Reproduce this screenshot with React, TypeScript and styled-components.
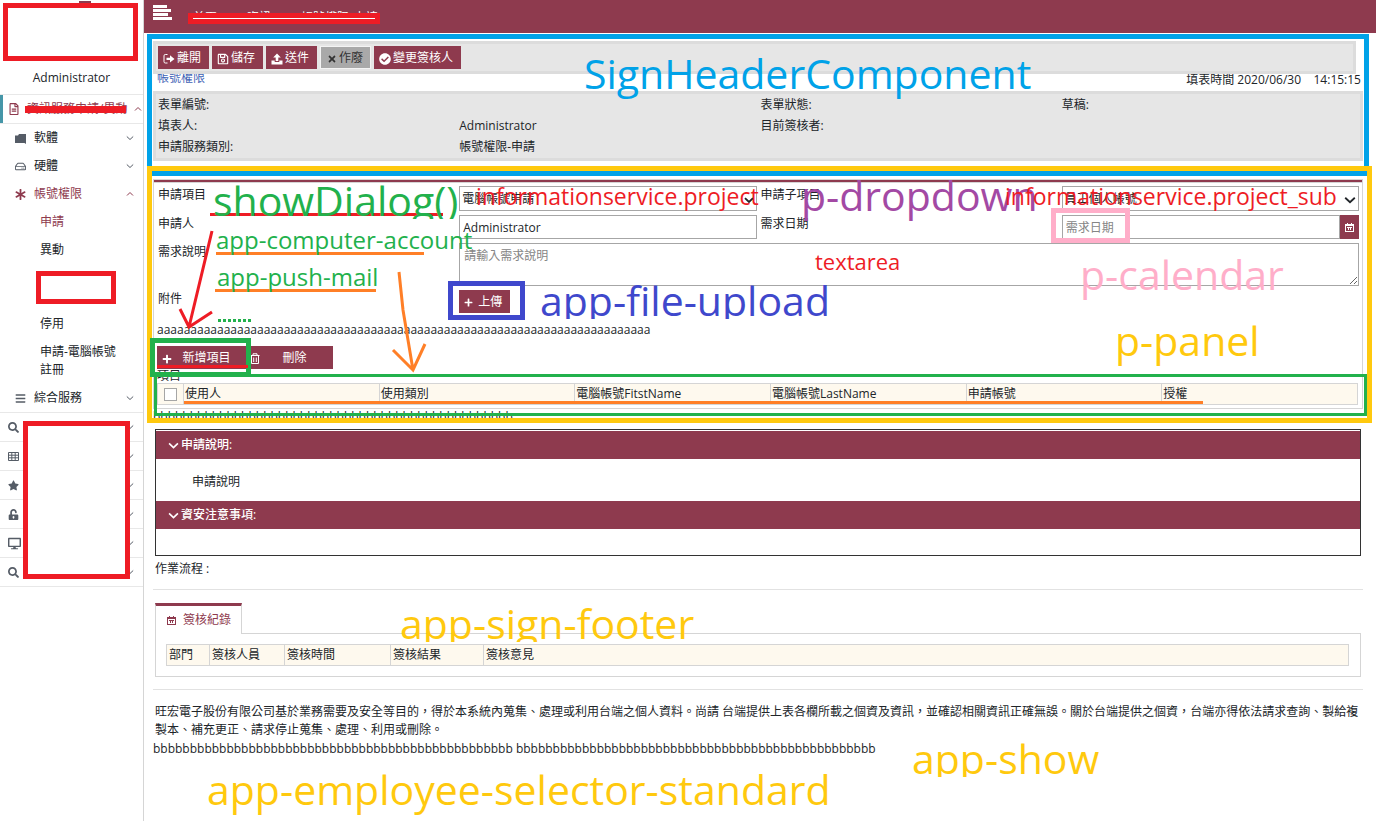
import React from 'react';
import styled, { createGlobalStyle, css } from 'styled-components';
import { FaAsterisk, FaBars, FaDesktop, FaFolder, FaPlus, FaSearch, FaStar, FaTimes, FaCheckCircle, FaRegHdd, FaRegSave, FaRegFileAlt, FaUnlockAlt } from 'react-icons/fa';

const wine = '#8e3a4e';
const red = '#ee1c25';
const green = '#22b14c';
const orange = '#ff7f27';
const gold = '#ffc90e';
const sky = '#00a2e8';
const indigo = '#3f48cc';
const pink = '#ffaec9';
const purple = '#a349a4';

const GlobalStyle = createGlobalStyle`
  *, *::before, *::after { box-sizing: border-box; }
  body {
    margin: 0;
    background: #fff;
    color: #212529;
    font: 12px/18px "Open Sans", "Noto Sans CJK TC", sans-serif;
  }
  button, input, select, textarea { font: inherit; color: inherit; }
  svg { display: block; flex: none; }
`;

const Page = styled.div`
  position: relative;
  display: flex;
  min-height: 100vh;
  overflow: hidden;
`;

/* ---------- sidebar ---------- */
const Sidebar = styled.aside`
  flex: none;
  width: 144px;
  border-right: 1px solid #d5d5d5;
`;
const Profile = styled.div`
  display: flex;
  flex-direction: column;
  align-items: center;
  height: 94px;
  padding-top: 1px;
`;
const Logo = styled.div`
  width: 12px;
  height: 12px;
  margin: 0 0 56px 26px;
  background: ${wine};
`;
const MenuList = styled.ul`
  margin: 0;
  padding: 0;
  list-style: none;
`;
const MenuLink = styled.a<{ $level: number; $active?: boolean }>`
  display: flex;
  align-items: center;
  gap: ${p => (p.$level === 0 ? 7 : 8)}px;
  min-height: 28px;
  padding: 5px 9px 5px ${p => [8, 15, 40][p.$level]}px;
  color: ${p => (p.$active ? wine : '#212529')};
  text-decoration: none;
  > svg { color: ${p => (p.$active ? wine : '#555c66')}; }
`;
const MenuGroup = styled.li<{ $current?: boolean }>`
  border-top: 1px solid #e8e8e8;
  > a { ${p => p.$current && css`box-shadow: inset 3px 0 #4596a8;`} }
  &:last-child { border-bottom: 1px solid #e8e8e8; }
`;
const SubList = styled(MenuList)`
  border-top: 1px solid #e8e8e8;
`;
const MenuText = styled.span`
  flex: 1;
  white-space: nowrap;
`;
const WrapText = styled.span`
  width: 80px;
  min-height: 36px;
`;

/* ---------- main column ---------- */
const Main = styled.main`
  flex: 1;
  min-width: 0;
`;
const TopBar = styled.header`
  display: flex;
  gap: 21px;
  height: 33px;
  padding: 5px 9px;
  background: ${wine};
  color: #fff;
`;
const Crumbs = styled.nav`
  display: flex;
  gap: 30px;
  line-height: 26px;
`;
const PlainButton = styled.button`
  display: block;
  align-self: flex-start;
  padding: 0;
  border: 0;
  background: none;
`;
const Content = styled.div`
  padding: 8px 13px 0 9px;
`;
const Toolbar = styled.div`
  display: flex;
  gap: 3px;
  margin-right: 7px;
  padding: 2px;
  border: 3px solid #dcdcdc;
  background: #e6e6e6;
`;
const Button = styled.button<{ $wide?: boolean }>`
  display: flex;
  align-items: center;
  gap: 2px;
  height: 23px;
  padding: 0 8px 0 5px;
  border: 0;
  background: ${wine};
  color: #fff;
  white-space: nowrap;
  > svg { margin-top: 2px; }
  &:disabled {
    padding: 0 7px 0 6px;
    border: 1px solid #f4f4f4;
    background: #a9a9a9;
    color: #333;
  }
  ${p => p.$wide && css`
    flex: 1;
    padding: 0 6px 0 5px;
    > span { flex: 1; text-align: center; }
  `}
`;
const TitleRow = styled.div`
  display: flex;
  justify-content: space-between;
  height: 17px;
  padding: 0 2px 0 4px;
  overflow: hidden;
  line-height: 12px;
`;
const TitleLink = styled.a`
  color: #3f63b5;
  line-height: 8px;
  text-decoration: none;
`;
const Time = styled.span`
  white-space: pre;
`;
const InfoGrid = styled.dl`
  display: grid;
  grid-template-columns: repeat(4, 1fr);
  grid-auto-rows: 21px;
  column-gap: 4px;
  margin: 0;
  padding: 0 1px 1px 2px;
  border: 3px solid #dcdcdc;
  background: #e6e6e6;
  line-height: 21px;
`;
const Term = styled.dt``;
const Detail = styled.dd`
  margin: 0;
`;

/* ---------- application form ---------- */
const Panel = styled.section`
  margin-top: 18px;
  padding-bottom: 3px;
  border: 1px solid #d5d5d5;
`;
const PanelEdge = styled.div`
  height: 3px;
  border-top: 2px solid ${wine};
  border-bottom: 1px solid #d5d5d5;
`;
const FormGrid = styled.form`
  display: grid;
  grid-template-columns: repeat(4, 1fr);
  grid-template-rows: 25px 24px 43px 23px;
  gap: 4px;
  padding: 3px 3px 0 4px;
`;
const Label = styled.label`
  line-height: 17px;
`;
const field = css`
  width: 100%;
  height: 100%;
  margin: 0;
  padding: 0 4px;
  border: 1px solid #a6a6a6;
  border-radius: 0;
  background: #fff;
  outline: 0;
`;
const TextBox = styled.input`
  ${field}
  min-width: 0;
  padding: 0 3px;
  &::placeholder { color: #858585; opacity: 1; }
`;
const TextArea = styled.textarea`
  ${field}
  grid-column: 2 / 5;
  padding: 3px 4px;
  &::placeholder { color: #858585; opacity: 1; }
`;
const SelectBox = styled.div`
  display: grid;
  align-items: center;
  > * { grid-area: 1 / 1; }
  > svg { justify-self: end; margin: 3px 3px 0 0; }
`;
const Select = styled.select`
  ${field}
  padding: 0 2px;
  appearance: none;
`;
const DateBox = styled.div`
  display: flex;
`;
const DateButton = styled.button`
  display: flex;
  flex: none;
  align-items: center;
  justify-content: center;
  width: 19px;
  padding: 0;
  border: 0;
  background: ${wine};
  color: #fff;
`;
const Upload = styled.div`
  display: flex;
`;
const Filler = styled.p`
  margin: 0;
  white-space: nowrap;
`;
const ItemArea = styled.div`
  margin-top: 8px;
  padding: 0 4px 0 3px;
`;
const ItemButtons = styled.div`
  display: flex;
  width: 176px;
  margin-top: 7px;
`;
const ItemCaption = styled.div`
  height: 14px;
  line-height: 13px;
`;
const DataTable = styled.table`
  width: 100%;
  border-collapse: collapse;
  table-layout: fixed;
  background: #fef9ee;
  line-height: 20px;
`;
const HeadCell = styled.th<{ $w?: number; $tight?: boolean }>`
  width: ${p => (p.$w ? `${p.$w}px` : 'auto')};
  height: 21px;
  padding: 0 ${p => (p.$tight ? 1 : 2)}px;
  border: 1px solid #d5d5d5;
  font-weight: 400;
  text-align: left;
`;
const Tick = styled.input`
  display: block;
  appearance: none;
  width: 13px;
  height: 13px;
  margin: 0 auto;
  border: 1px solid #a6a6a6;
  background: #fff;
`;

/* ---------- notices and sign footer ---------- */
const HiddenLine = styled(Filler)`
  height: 20px;
  line-height: 16px;
`;
const Accordion = styled.section`
  margin: 0 2px 4px;
  padding-top: 1px;
  border: 1px solid #333;
`;
const AccordionHead = styled.button`
  display: flex;
  align-items: center;
  gap: 2px;
  width: 100%;
  height: 28px;
  padding: 0 12px;
  border: 0;
  background: ${wine};
  color: #fff;
  font-weight: 500;
`;
const AccordionBody = styled.div<{ $empty?: boolean }>`
  min-height: 26px;
  padding: ${p => (p.$empty ? 0 : '14px 36px 10px')};
`;
const Flow = styled.div`
  padding: 0 2px 11px;
`;
const Rule = styled.hr`
  height: 1px;
  margin: 0;
  border: 0;
  background: #e2e2e2;
`;
const Tabs = styled.section`
  margin: 13px 2px 12px;
`;
const Tab = styled.button`
  position: relative;
  display: flex;
  align-items: center;
  gap: 7px;
  height: 31px;
  margin-bottom: -1px;
  padding: 0 10px 0 11px;
  border: 1px solid #d5d5d5;
  border-top: 3px solid ${wine};
  border-bottom: 0;
  background: #fff;
  color: ${wine};
`;
const TabPanel = styled.div`
  padding: 10px 11px 10px 10px;
  border: 1px solid #d5d5d5;
`;
const Notice = styled.p`
  margin: 13px 2px 1px;
`;

/* ---------- mark-up drawn over the page ---------- */
const Overlay = styled.div`
  position: absolute;
  inset: 0;
  overflow: hidden;
  pointer-events: none;
`;
const Frame = styled.div<{ $x: number; $y: number; $w?: number; $right?: number; $h: number; $line?: number; $c: string; $solid?: boolean }>`
  position: absolute;
  left: ${p => p.$x}px;
  top: ${p => p.$y}px;
  ${p => (p.$w ? `width: ${p.$w}px;` : `right: ${p.$right}px;`)}
  height: ${p => p.$h}px;
  border: ${p => p.$line ?? 5}px solid ${p => p.$c};
  background: ${p => (p.$solid ? '#fff' : 'transparent')};
`;
/* $base is the baseline of the text; $clip cuts the descenders just below it */
const noteTop = (p: { $base: number; $size: number }) => Math.round(p.$base - p.$size * 1.088);
const Note = styled.span<{ $x: number; $base: number; $size: number; $c: string; $clip?: boolean }>`
  position: absolute;
  left: ${p => p.$x}px;
  top: ${noteTop}px;
  height: ${p => (p.$clip ? p.$base + 2 - noteTop(p) : Math.round(p.$size * 1.4))}px;
  overflow: ${p => (p.$clip ? 'hidden' : 'visible')};
  color: ${p => p.$c};
  font-size: ${p => p.$size}px;
  line-height: ${p => Math.round(p.$size * 1.4)}px;
  white-space: nowrap;
`;
const Strokes = styled.svg`
  position: absolute;
  inset: 0;
  width: 100%;
  height: 100%;
`;

/* ---------- icons ---------- */
const Chevron = ({ up, size = 8, weight = 1 }: { up?: boolean; size?: number; weight?: number }) => (
  <svg width={size} height={size} viewBox="0 0 8 8" fill="none" stroke="currentColor" strokeWidth={weight}>
    <path d={up ? 'M1 5.5 4 2.5 7 5.5' : 'M.8 2.5 4 5.5 7.2 2.5'} />
  </svg>
);
const ExitIcon = () => (
  <svg width="12" height="12" viewBox="0 0 12 12">
    <path d="M4.5 1.5H2.3Q1 1.5 1 2.8V8.700Q1 10 2.300 10H4.500" fill="none" stroke="currentColor" />
    <path d="M3.500 4.700H7V2.200L11.500 5.900 7 9.600V7H3.500z" fill="currentColor" />
  </svg>
);
const SendIcon = () => (
  <svg width="12" height="12" viewBox="0 0 12 12" fill="currentColor">
    <path d="M6 .5 9.800 4.500H7.300V8H4.700V4.500H2.200z" />
    <path d="M.5 7.500H3.700V9H8.300V7.500H11.500V11.500H.5z" />
  </svg>
);
const TrashIcon = () => (
  <svg width="10" height="11" viewBox="0 0 10 11" fill="none" stroke="currentColor">
    <path d="M.5 2.500H9.500M3 2.500V.8H7V2.500M1.500 2.500V10.500H8.500V2.500M3.700 4.500V9M6.300 4.500V9" />
  </svg>
);
const CalendarIcon = () => (
  <svg width="9" height="9" viewBox="0 0 9 9" fill="none" stroke="currentColor">
    <path d="M2 .5H3M6 .5H7M.5 8.500V2M8.500 8.500V2M0 8.500H9M2 4.500H7M3.500 4.500V7M5.500 4.500V7" />
    <path d="M0 2H9" strokeWidth="2" />
  </svg>
);
const FolderIcon = () => (
  <svg width="11" height="11" viewBox="0 0 11 11" fill="currentColor">
    <path d="M0 2.500H3L4 1H11V11L9.500 10H0z" />
  </svg>
);
const GridIcon = () => (
  <svg width="11" height="9" viewBox="0 0 11 9" fill="none" stroke="currentColor">
    <path d="M.5 .5H10.500V8.500H.5zM.5 3.200H10.500M.5 5.800H10.500M3.800 .5V8.500M7.200 .5V8.500" />
  </svg>
);
const MenuIcon = () => (
  <svg width="19" height="15" viewBox="0 0 19 15" fill="#fff">
    <path d="M0 0H14V3H0zM0 4H18V7H0zM0 8H15V11H0zM0 12H19V15H0z" />
  </svg>
);

const lowerGroups = [<FaSearch size={11} />, <GridIcon />, <FaStar size={11} />, <FaUnlockAlt size={11} />, <FaDesktop size={13} />, <FaSearch size={11} />];

const Menu = () => (
  <MenuList>
    <MenuGroup $current>
      <MenuLink href="#" $level={0} $active><FaRegFileAlt size={12} /><MenuText>資訊服務申請/異動</MenuText><Chevron up /></MenuLink>
      <SubList>
        <li><MenuLink href="#" $level={1}><FolderIcon /><MenuText>軟體</MenuText><Chevron /></MenuLink></li>
        <li><MenuLink href="#" $level={1}><FaRegHdd size={11} /><MenuText>硬體</MenuText><Chevron /></MenuLink></li>
        <li>
          <MenuLink href="#" $level={1} $active><FaAsterisk size={11} /><MenuText>帳號權限</MenuText><Chevron up /></MenuLink>
          <MenuList>
            <li><MenuLink href="#" $level={2} $active>申請</MenuLink></li>
            <li><MenuLink href="#" $level={2}>異動</MenuLink></li>
            <li><MenuLink href="#" $level={2}><WrapText /></MenuLink></li>
            <li><MenuLink href="#" $level={2}>停用</MenuLink></li>
            <li><MenuLink href="#" $level={2}><WrapText>申請-電腦帳號註冊</WrapText></MenuLink></li>
          </MenuList>
        </li>
        <li><MenuLink href="#" $level={1}><FaBars size={11} /><MenuText>綜合服務</MenuText><Chevron /></MenuLink></li>
      </SubList>
    </MenuGroup>
    {lowerGroups.map((icon, i) => (
      <MenuGroup key={i}>
        <MenuLink href="#" $level={0}>{icon}<MenuText /><Chevron /></MenuLink>
      </MenuGroup>
    ))}
  </MenuList>
);

const info = [
  ['表單編號:', '', '表單狀態:', '草稿:'],
  ['填表人:', 'Administrator', '目前簽核者:', ''],
  ['申請服務類別:', '帳號權限-申請', '', ''],
];

const itemColumns = ['使用人', '使用類別', '電腦帳號FitstName', '電腦帳號LastName', '申請帳號', '授權'];
const signColumns: [string, number?][] = [['部門', 43], ['簽核人員', 75], ['簽核時間', 106], ['簽核結果', 93], ['簽核意見']];

const notes: { t: string; x: number; base: number; size: number; c: string; clip?: boolean }[] = [
  { t: 'SignHeaderComponent', x: 584, base: 90, size: 41, c: sky },
  { t: 'showDialog()', x: 213, base: 217, size: 41, c: green, clip: true },
  { t: 'app-computer-account', x: 216, base: 249, size: 24, c: green },
  { t: 'app-push-mail', x: 217, base: 286, size: 24, c: green },
  { t: 'informationservice.project', x: 476, base: 205, size: 23, c: red },
  { t: 'p-dropdown', x: 801, base: 212, size: 41, c: purple },
  { t: 'informationservice.project_sub', x: 1005, base: 205, size: 23, c: red },
  { t: 'textarea', x: 815, base: 270, size: 22, c: red },
  { t: 'p-calendar', x: 1080, base: 291, size: 41, c: pink },
  { t: 'app-file-upload', x: 540, base: 317, size: 41, c: indigo, clip: true },
  { t: 'p-panel', x: 1115, base: 357, size: 41, c: gold },
  { t: 'app-sign-footer', x: 400, base: 640, size: 41, c: gold, clip: true },
  { t: 'app-show', x: 912, base: 775, size: 41, c: gold, clip: true },
  { t: 'app-employee-selector-standard', x: 207, base: 806, size: 41, c: gold },
];

const MarkUp = () => (
  <Overlay>
    <Frame $x={3} $y={3} $w={135} $h={58} $c={red} $solid />
    <Frame $x={188} $y={13} $w={192} $h={11} $c={red} $solid />
    <Frame $x={36} $y={271} $w={80} $h={33} $c={red} $solid />
    <Frame $x={23} $y={421} $w={107} $h={158} $c={red} $solid />
    <Frame $x={147} $y={34} $right={7} $h={142} $c={sky} />
    <Frame $x={147} $y={166} $right={4} $h={257} $c={gold} />
    <Frame $x={1051} $y={208} $w={79} $h={35} $c={pink} />
    <Frame $x={448} $y={281} $w={77} $h={39} $c={indigo} />
    <Frame $x={150} $y={338} $w={101} $h={39} $c={green} />
    <Frame $x={154} $y={374} $right={9} $h={42} $line={3} $c={green} />
    <Strokes fill="none" strokeWidth="3">
      <g stroke={red}>
        <path d="M25 109.500H126" strokeWidth="7" />
        <path d="M210 214.500H443M157 366.500H248" />
        <path d="M212 231 189 327M180 309 189 327 212 312" />
      </g>
      <g stroke={orange}>
        <path d="M216 253.500H424M215 290.500H376M184 402.500H1203" />
        <path d="M399 272 403 310 413 370M393 350 413 370 425 344" />
      </g>
      <path d="M218 320.500H252" stroke={green} strokeDasharray="3 2" />
    </Strokes>
    {notes.map(n => (
      <Note key={n.t} $x={n.x} $base={n.base} $size={n.size} $c={n.c} $clip={n.clip}>{n.t}</Note>
    ))}
  </Overlay>
);

export default function App() {
  return (
    <Page>
      <GlobalStyle />
      <Sidebar>
        <Profile><Logo />Administrator</Profile>
        <Menu />
      </Sidebar>
      <Main>
        <TopBar>
          <PlainButton aria-label="選單"><MenuIcon /></PlainButton>
          <Crumbs><span>首頁</span><span>資訊</span><span>帳號權限/申請</span></Crumbs>
        </TopBar>
        <Content>
          <Toolbar>
            <Button><ExitIcon />離開</Button>
            <Button><FaRegSave size={12} />儲存</Button>
            <Button><SendIcon />送件</Button>
            <Button disabled><FaTimes size={10} />作廢</Button>
            <Button><FaCheckCircle size={12} />變更簽核人</Button>
          </Toolbar>
          <TitleRow>
            <TitleLink href="#">帳號權限</TitleLink>
            <Time>{'填表時間 2020/06/30    14:15:15'}</Time>
          </TitleRow>
          <InfoGrid>
            {info.map((row, r) => row.map((cell, c) => (c % 2 && r ? <Detail key={`${r}${c}`}>{cell}</Detail> : <Term key={`${r}${c}`}>{cell}</Term>)))}
          </InfoGrid>

          <Panel>
            <PanelEdge />
            <FormGrid>
              <Label htmlFor="project">申請項目</Label>
              <SelectBox>
                <Select id="project"><option>電腦帳號申請</option></Select>
                <Chevron size={10} weight={1.5} />
              </SelectBox>
              <Label htmlFor="sub">申請子項目</Label>
              <SelectBox>
                <Select id="sub"><option>員工個人帳號</option></Select>
                <Chevron size={12} weight={1.2} />
              </SelectBox>
              <Label htmlFor="applicant">申請人</Label>
              <TextBox id="applicant" defaultValue="Administrator" />
              <Label htmlFor="need">需求日期</Label>
              <DateBox>
                <TextBox id="need" placeholder="需求日期" />
                <DateButton type="button" aria-label="選擇日期"><CalendarIcon /></DateButton>
              </DateBox>
              <Label htmlFor="detail">需求說明</Label>
              <TextArea id="detail" placeholder="請輸入需求說明" />
              <Label as="span">附件</Label>
              <Upload><Button type="button"><FaPlus size={9} />&nbsp;上傳</Button></Upload>
            </FormGrid>
            <ItemArea>
              <Filler>{'a'.repeat(74)}</Filler>
              <ItemButtons>
                <Button type="button" $wide><FaPlus size={10} /><span>新增項目</span></Button>
                <Button type="button" $wide><TrashIcon /><span>刪除</span></Button>
              </ItemButtons>
              <ItemCaption>項目</ItemCaption>
              <DataTable>
                <thead>
                  <tr>
                    <HeadCell $w={26} $tight><Tick type="checkbox" aria-label="全選" /></HeadCell>
                    {itemColumns.map(c => <HeadCell key={c} $tight>{c}</HeadCell>)}
                  </tr>
                </thead>
              </DataTable>
            </ItemArea>
          </Panel>
          <HiddenLine>{'b'.repeat(49)}</HiddenLine>

          <Accordion>
            <AccordionHead><Chevron size={11} weight={1.2} />申請說明:</AccordionHead>
            <AccordionBody>申請說明</AccordionBody>
            <AccordionHead><Chevron size={11} weight={1.2} />資安注意事項:</AccordionHead>
            <AccordionBody $empty />
          </Accordion>
          <Flow>作業流程 :</Flow>
          <Rule />
          <Tabs>
            <Tab><CalendarIcon />簽核紀錄</Tab>
            <TabPanel>
              <DataTable>
                <thead>
                  <tr>{signColumns.map(([c, w]) => <HeadCell key={c} $w={w}>{c}</HeadCell>)}</tr>
                </thead>
              </DataTable>
            </TabPanel>
          </Tabs>
          <Rule />
          <Notice>旺宏電子股份有限公司基於業務需要及安全等目的，得於本系統內蒐集、處理或利用台端之個人資料。尚請 台端提供上表各欄所載之個資及資訊，並確認相關資訊正確無誤。關於台端提供之個資，台端亦得依法請求查詢、製給複製本、補充更正、請求停止蒐集、處理、利用或刪除。</Notice>
          <Filler>{'b'.repeat(49)} {'b'.repeat(49)}</Filler>
        </Content>
      </Main>
      <MarkUp />
    </Page>
  );
}
